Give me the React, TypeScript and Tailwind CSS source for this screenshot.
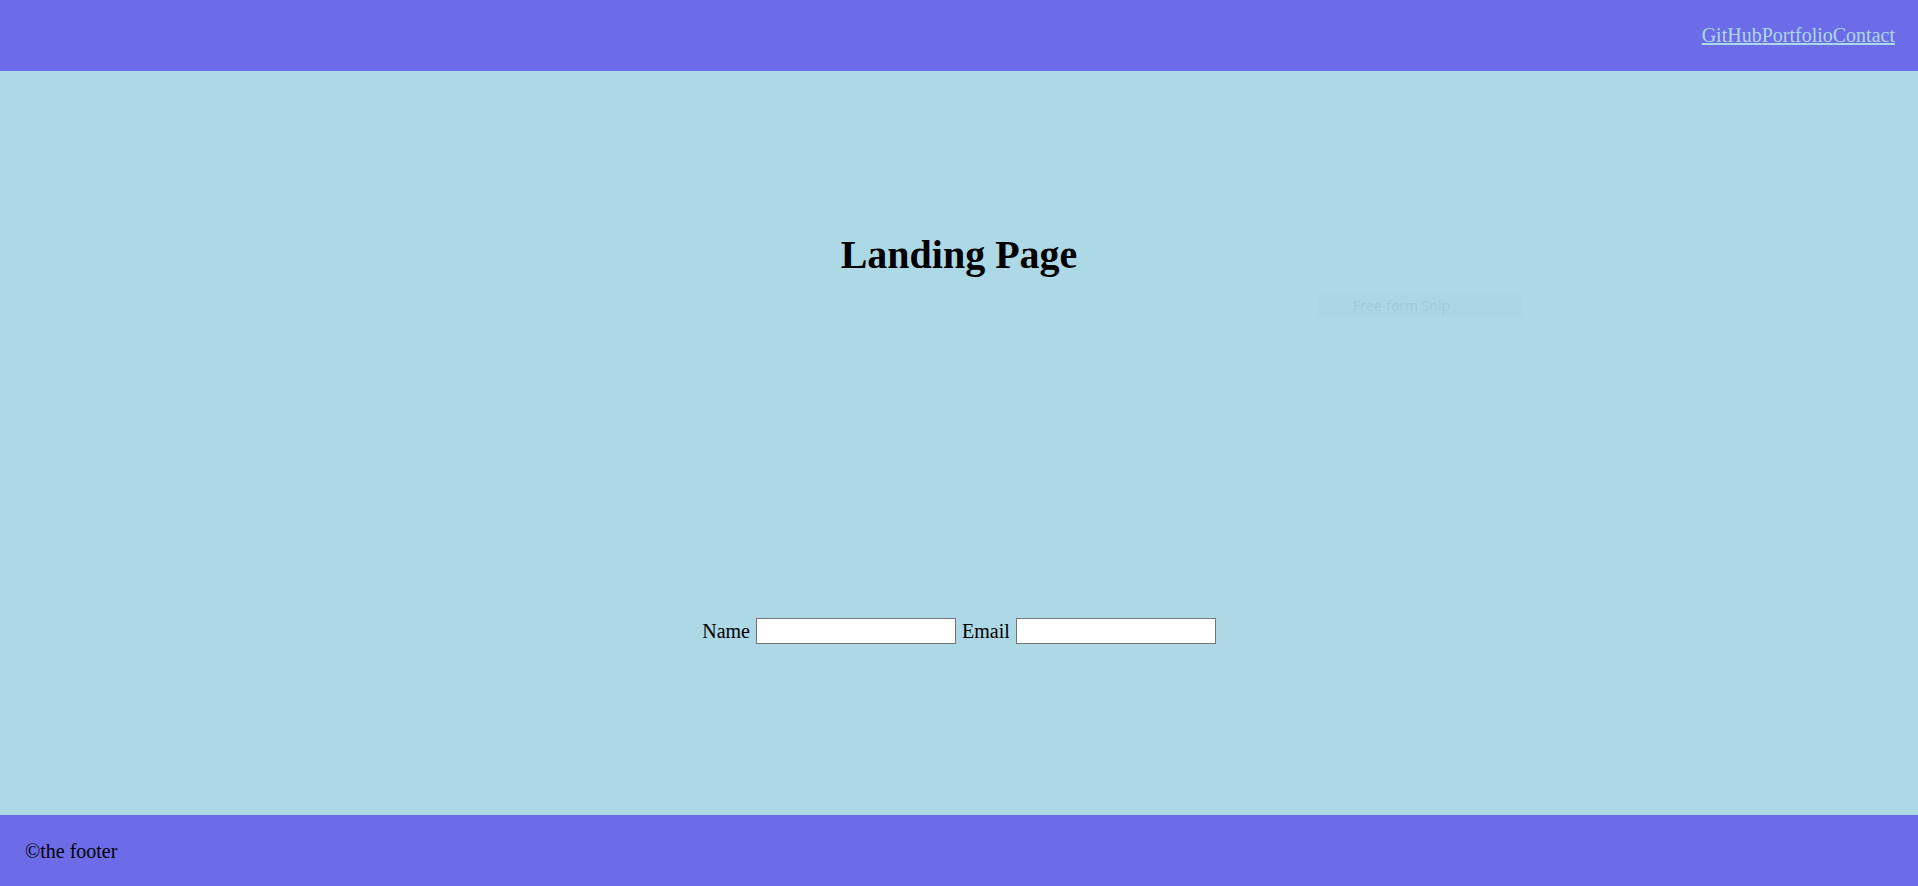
export default function App() {
  return (
    <div className="flex h-[886px] w-full flex-col bg-[#add8e6] font-['Liberation_Serif',serif] text-black">
      <header className="flex h-[71px] shrink-0 items-center justify-end bg-[#6c6ce9] pr-[23px]">
        <nav className="-mt-[2px] flex text-[20px] text-[#add8e6]">
          <a href="#" className="underline">GitHub</a>
          <a href="#" className="underline">Portfolio</a>
          <a href="#" className="underline">Contact</a>
        </nav>
      </header>

      <main className="relative flex flex-1 flex-col items-center">
        <h1 className="mt-[161px] text-[40px] font-bold leading-[46px]">Landing Page</h1>

        <form className="mt-[340px] flex h-[26px] items-center gap-[6px] text-[20px]">
          <label htmlFor="name">Name</label>
          <input id="name" type="text" className="h-[26px] w-[200px] border border-[#767676] bg-white" />
          <label htmlFor="email">Email</label>
          <input id="email" type="email" className="h-[26px] w-[200px] border border-[#767676] bg-white" />
        </form>

        {/* faint snipping-tool ghost left in the capture */}
        <div className="absolute left-[1318px] top-[223px] flex h-[23px] w-[204px] items-center bg-[#abd7e5] pl-[35px] font-['Open_Sans',sans-serif] text-[14px] text-[#a1cad8]">
          Free-form Snip
        </div>
      </main>

      <footer className="flex h-[71px] shrink-0 items-center bg-[#6c6ce9] pl-[25px] text-[20px]">
        ©the footer
      </footer>
    </div>
  );
}
